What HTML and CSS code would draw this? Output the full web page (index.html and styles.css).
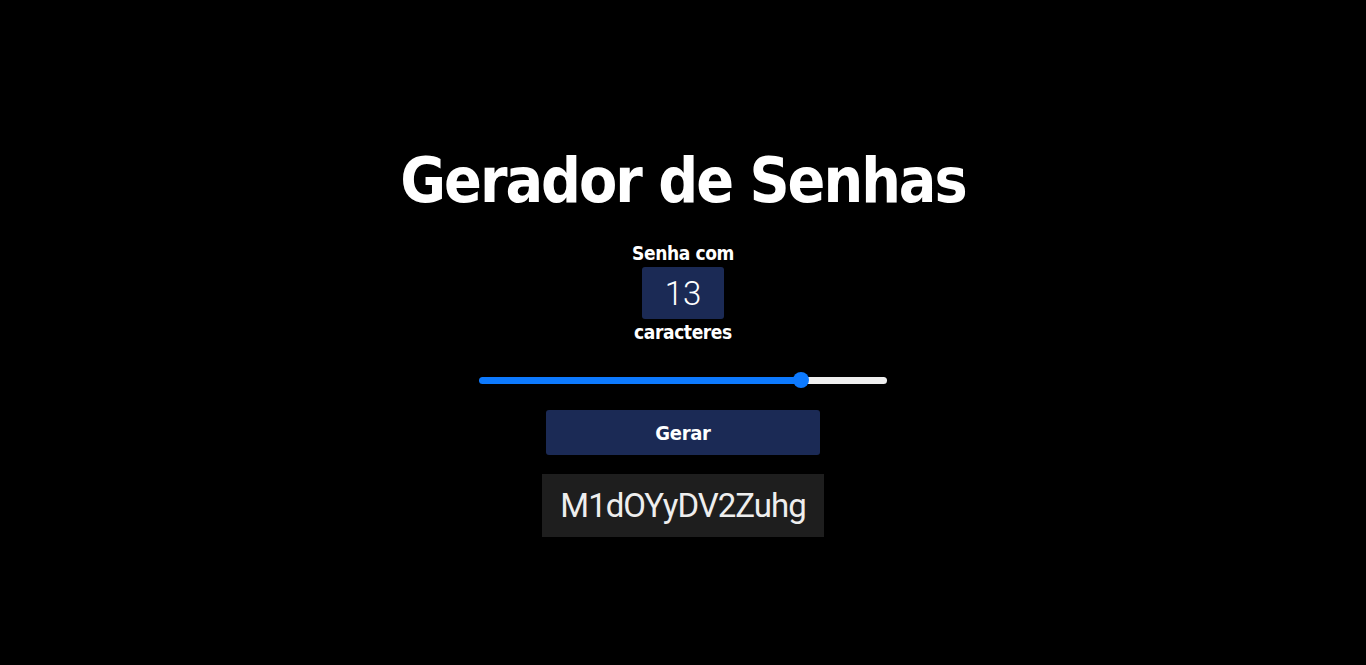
FILE: index.html
```html
<!DOCTYPE html>
<html lang="pt-BR">
<head>
<meta charset="utf-8">
<title>Gerador de Senhas</title>
<link rel="stylesheet" href="styles.css">
</head>
<body>
<main class="app">
  <h1 class="title">Gerador de Senhas</h1>
  <div class="length">
    <span class="label">Senha com</span>
    <span class="count">13</span>
    <span class="label">caracteres</span>
  </div>
  <input class="slider" type="range" min="1" max="16" value="13" style="--fill: 80%">
  <button class="generate" type="button">Gerar</button>
  <div class="result">M1dOYyDV2Zuhg</div>
</main>
</body>
</html>
```

FILE: styles.css
```css
html, body {
  margin: 0;
  padding: 0;
  background: #000;
  height: 100%;
}

body {
  font-family: "DejaVu Sans Condensed", "DejaVu Sans", sans-serif;
  color: #fff;
}

.app {
  display: flex;
  flex-direction: column;
  align-items: center;
  padding-top: 141px;
}

.title {
  margin: 0;
  font-size: 62px;
  line-height: 80px;
  font-weight: 700;
  letter-spacing: -2px;
}

.length {
  display: flex;
  flex-direction: column;
  align-items: center;
  margin-top: 20px;
}

.label {
  font-size: 19px;
  line-height: 24px;
  font-weight: 700;
  letter-spacing: -0.4px;
}

.count {
  width: 82px;
  height: 52px;
  margin: 2px 0 1px;
  background: #1b2a55;
  border-radius: 3px;
  display: flex;
  align-items: center;
  justify-content: center;
  font-family: Roboto, sans-serif;
  font-weight: 300;
  font-size: 33px;
}

.slider {
  -webkit-appearance: none;
  appearance: none;
  width: 408px;
  height: 16px;
  margin: 28px 0 0;
  padding: 0;
  background: transparent;
}

.slider::-webkit-slider-runnable-track {
  height: 7px;
  border-radius: 4px;
  background: linear-gradient(to right, #0d7aff 0, #0d7aff var(--fill), #efefef var(--fill), #efefef 100%);
}

.slider::-webkit-slider-thumb {
  -webkit-appearance: none;
  appearance: none;
  width: 16px;
  height: 16px;
  margin-top: -4.5px;
  border-radius: 50%;
  background: #0d7aff;
  border: none;
}

.generate {
  width: 274px;
  height: 45px;
  margin-top: 22px;
  border: none;
  border-radius: 3px;
  background: #1b2a55;
  color: #fff;
  font-family: "DejaVu Sans Condensed", "DejaVu Sans", sans-serif;
  font-weight: 700;
  font-size: 20px;
  letter-spacing: -0.3px;
}

.result {
  margin-top: 19px;
  height: 63px;
  padding: 0 18px;
  min-width: 242px;
  background: #1e1e1e;
  color: #eee;
  display: flex;
  align-items: center;
  justify-content: center;
  font-family: Roboto, sans-serif;
  font-size: 33px;
  letter-spacing: -1px;
}
```
